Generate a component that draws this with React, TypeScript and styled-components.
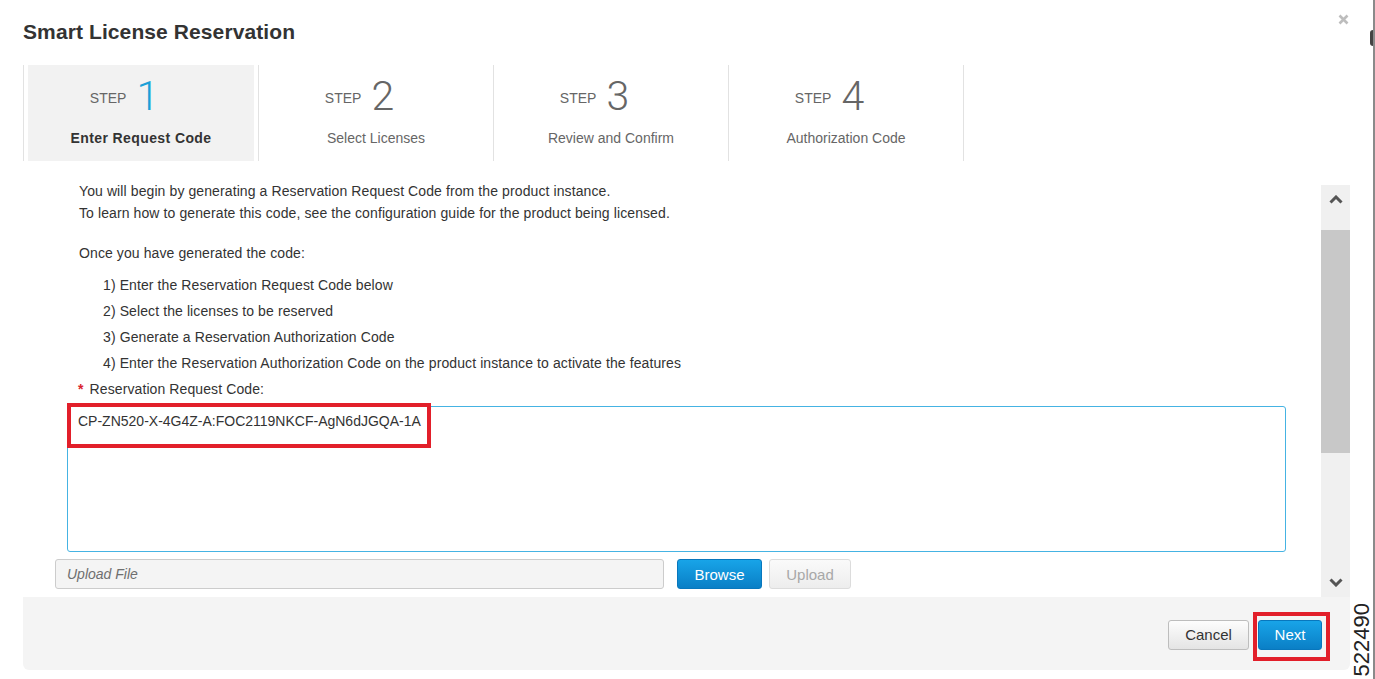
import { FC } from "react";
import styled, { createGlobalStyle, css } from "styled-components";

const GlobalStyle = createGlobalStyle`
  html, body {
    margin: 0;
    padding: 0;
    background: #fff;
  }
  body {
    font-family: "Liberation Sans", Arial, sans-serif;
    color: #333;
  }
`;

const steps = [
  { num: "1", label: "Enter Request Code" },
  { num: "2", label: "Select Licenses" },
  { num: "3", label: "Review and Confirm" },
  { num: "4", label: "Authorization Code" },
];

const Chevron: FC<{ down?: boolean }> = ({ down }) => (
  <svg width="14" height="9" viewBox="0 0 14 9">
    <polyline
      points={down ? "1.5,1.5 7,7 12.5,1.5" : "1.5,7.5 7,2 12.5,7.5"}
      fill="none"
      stroke="#555"
      strokeWidth="3"
    />
  </svg>
);

export default function App() {
  return (
    <>
      <GlobalStyle />
      <StyledPage>
        <StyledDialog>
          <StyledHeader>
            <StyledTitle>Smart License Reservation</StyledTitle>
            <StyledClose aria-label="close">
              <svg width="11" height="11" viewBox="0 0 11 11">
                <path d="M1.5 1.5 L9.5 9.5 M9.5 1.5 L1.5 9.5" stroke="#bdbdbd" strokeWidth="2.6" />
              </svg>
            </StyledClose>
          </StyledHeader>

          <StyledSteps>
            {steps.map((s, i) => (
              <StyledStep key={s.num} $last={i === steps.length - 1}>
                <StyledStepInner $active={i === 0}>
                  <StyledStepRow>
                    <StyledStepWord>STEP</StyledStepWord>
                    <StyledStepNum $active={i === 0}>{s.num}</StyledStepNum>
                  </StyledStepRow>
                  <StyledStepLabel $active={i === 0}>{s.label}</StyledStepLabel>
                </StyledStepInner>
              </StyledStep>
            ))}
          </StyledSteps>

          <StyledBody>
            <StyledContent>
              <StyledIntro>
                <p>You will begin by generating a Reservation Request Code from the product instance.</p>
                <p>To learn how to generate this code, see the configuration guide for the product being licensed.</p>
                <StyledOnce>Once you have generated the code:</StyledOnce>
                <StyledList>
                  <li>1) Enter the Reservation Request Code below</li>
                  <li>2) Select the licenses to be reserved</li>
                  <li>3) Generate a Reservation Authorization Code</li>
                  <li>4) Enter the Reservation Authorization Code on the product instance to activate the features</li>
                </StyledList>
              </StyledIntro>
              <StyledFieldLabel>
                <span>*</span>Reservation Request Code:
              </StyledFieldLabel>
              <StyledCodeWrap>
                <StyledTextarea readOnly value="CP-ZN520-X-4G4Z-A:FOC2119NKCF-AgN6dJGQA-1A" />
                <StyledCodeMark />
              </StyledCodeWrap>
              <StyledUploadRow>
                <StyledFileInput placeholder="Upload File" readOnly />
                <StyledButton $variant="primary">Browse</StyledButton>
                <StyledButton $variant="disabled" $gap={7}>
                  Upload
                </StyledButton>
              </StyledUploadRow>
            </StyledContent>
            <StyledScrollbar>
              <StyledScrollUp>
                <Chevron />
              </StyledScrollUp>
              <StyledThumb />
              <StyledScrollDown>
                <Chevron down />
              </StyledScrollDown>
            </StyledScrollbar>
          </StyledBody>

          <StyledFooter>
            <StyledButton $variant="default" $width={81}>
              Cancel
            </StyledButton>
            <StyledNextWrap>
              <StyledButton $variant="primary" $width={64}>
                Next
              </StyledButton>
            </StyledNextWrap>
          </StyledFooter>
        </StyledDialog>

        <StyledGutter>
          <StyledEdgeMark />
          <StyledFigureId>522490</StyledFigureId>
        </StyledGutter>
      </StyledPage>
    </>
  );
}

const StyledPage = styled.div`
  display: flex;
  width: 1375px;
  height: 679px;
  overflow: hidden;
`;
const StyledDialog = styled.div`
  margin-left: 23px;
  width: 1327px;
  height: 670px;
  display: flex;
  flex-direction: column;
`;
const StyledHeader = styled.div`
  height: 65px;
  display: flex;
  justify-content: space-between;
  align-items: flex-start;
`;
const StyledTitle = styled.h1`
  margin: 20px 0 0;
  font-size: 21px;
  line-height: 24px;
  font-weight: bold;
  letter-spacing: 0.1px;
  color: #333;
`;
const StyledClose = styled.div`
  margin: 14px 1px 0 0;
  width: 11px;
  height: 11px;
  display: flex;
`;
const StyledSteps = styled.div`
  display: flex;
  height: 96px;
`;
const StyledStep = styled.div<{ $last?: boolean }>`
  width: 235px;
  box-sizing: border-box;
  border-left: 1px solid #e2e2e2;
  padding: 0 4px;
  ${(p) =>
    p.$last &&
    css`
      width: 236px;
      border-right: 1px solid #e2e2e2;
    `}
`;
const StyledStepInner = styled.div<{ $active?: boolean }>`
  height: 100%;
  display: flex;
  flex-direction: column;
  align-items: center;
  padding-top: 11px;
  box-sizing: border-box;
  background: ${(p) => (p.$active ? "#f2f2f2" : "transparent")};
`;
const StyledStepRow = styled.div`
  height: 40px;
  display: flex;
  align-items: center;
  padding-right: 33px;
`;
const StyledStepWord = styled.span`
  font-size: 14px;
  color: #666;
  margin-top: 3px;
`;
const StyledStepNum = styled.span<{ $active?: boolean }>`
  font-family: Roboto, "Liberation Sans", sans-serif;
  font-weight: 300;
  font-size: 41px;
  line-height: 40px;
  margin-left: 10px;
  color: ${(p) => (p.$active ? "#1ba0d7" : "#666")};
`;
const StyledStepLabel = styled.div<{ $active?: boolean }>`
  margin-top: 12px;
  font-size: 14px;
  line-height: 20px;
  color: ${(p) => (p.$active ? "#333" : "#666")};
  font-weight: ${(p) => (p.$active ? "bold" : "normal")};
  letter-spacing: ${(p) => (p.$active ? "0.4px" : "0")};
`;
const StyledBody = styled.div`
  height: 436px;
  display: flex;
`;
const StyledContent = styled.div`
  flex: 1;
  padding-top: 19px;
  box-sizing: border-box;
  font-size: 14px;
  letter-spacing: 0.1px;
  color: #333;
`;
const StyledIntro = styled.div`
  padding-left: 56px;
  p {
    margin: 0;
    line-height: 22px;
  }
`;
const StyledOnce = styled.p`
  margin-top: 18px !important;
`;
const StyledList = styled.ul`
  list-style: none;
  margin: 8px 0 0;
  padding: 0 0 0 24px;
  li {
    line-height: 26px;
  }
`;
const StyledFieldLabel = styled.div`
  padding-left: 55px;
  line-height: 26px;
  span {
    color: #d9232e;
    font-weight: bold;
    margin-right: 6px;
  }
`;
const StyledCodeWrap = styled.div`
  position: relative;
  margin: 4px 35px 0 44px;
  height: 146px;
`;
const StyledTextarea = styled.textarea`
  display: block;
  width: 100%;
  height: 100%;
  box-sizing: border-box;
  border: 1px solid #45b3e3;
  border-radius: 3px;
  padding: 6px 10px;
  font-family: "Liberation Sans", Arial, sans-serif;
  font-size: 14px;
  line-height: 17px;
  color: #333;
  resize: none;
  outline: none;
`;
const StyledCodeMark = styled.div`
  position: absolute;
  left: 0;
  top: -3px;
  width: 364px;
  height: 45px;
  box-sizing: border-box;
  border: 4px solid #e21f2a;
  pointer-events: none;
`;
const StyledUploadRow = styled.div`
  display: flex;
  align-items: center;
  margin: 7px 0 0 32px;
  height: 30px;
`;
const StyledFileInput = styled.input`
  width: 609px;
  height: 30px;
  box-sizing: border-box;
  border: 1px solid #ccc;
  border-radius: 3px;
  background: #f4f4f4;
  padding: 0 11px;
  font-family: "Liberation Sans", Arial, sans-serif;
  font-size: 14px;
  margin-right: 13px;
  outline: none;
  &::placeholder {
    color: #6f6f6f;
    font-style: italic;
  }
`;
const StyledButton = styled.button<{
  $variant: "primary" | "default" | "disabled";
  $width?: number;
  $gap?: number;
}>`
  height: 30px;
  width: ${(p) => (p.$width ? `${p.$width}px` : p.$variant === "primary" ? "85px" : "82px")};
  margin-left: ${(p) => (p.$gap ? `${p.$gap}px` : "0")};
  box-sizing: border-box;
  border-radius: 3px;
  font-family: "Liberation Sans", Arial, sans-serif;
  font-size: 15px;
  padding: 0;
  cursor: pointer;
  ${(p) =>
    p.$variant === "primary" &&
    css`
      background: linear-gradient(#18a4e8, #0a7fc6);
      border: 1px solid #0877bd;
      color: #fff;
    `}
  ${(p) =>
    p.$variant === "default" &&
    css`
      background: linear-gradient(#fdfdfd, #e4e4e4);
      border: 1px solid #bdbdbd;
      color: #333;
    `}
  ${(p) =>
    p.$variant === "disabled" &&
    css`
      background: linear-gradient(#fafafa, #ededed);
      border: 1px solid #dcdcdc;
      color: #a8a8a8;
    `}
`;
const StyledScrollbar = styled.div`
  width: 29px;
  margin-top: 24px;
  background: #f0f0f0;
  display: flex;
  flex-direction: column;
`;
const StyledScrollUp = styled.div`
  height: 45px;
  display: flex;
  justify-content: center;
  padding-top: 10px;
  box-sizing: border-box;
`;
const StyledThumb = styled.div`
  height: 223px;
  background: #c8c8c8;
`;
const StyledScrollDown = styled.div`
  flex: 1;
  display: flex;
  justify-content: center;
  align-items: flex-end;
  padding-bottom: 10px;
`;
const StyledFooter = styled.div`
  height: 73px;
  background: #f4f4f4;
  border-radius: 0 0 6px 6px;
  display: flex;
  justify-content: flex-end;
  align-items: center;
  gap: 9px;
  padding-right: 28px;
  padding-top: 2px;
  box-sizing: border-box;
`;
const StyledNextWrap = styled.div`
  position: relative;
  display: flex;
  &::after {
    content: "";
    position: absolute;
    left: -5px;
    right: -8px;
    top: -8px;
    bottom: -11px;
    border: 4px solid #e21f2a;
    pointer-events: none;
  }
`;
const StyledGutter = styled.div`
  flex: 1;
  display: flex;
  flex-direction: column;
  align-items: flex-end;
  border-right: 2px solid #8a8a8a;
`;
const StyledEdgeMark = styled.div`
  margin-top: 30px;
  width: 3px;
  height: 16px;
  border-radius: 8px 0 0 8px;
  background: #444;
`;
const StyledFigureId = styled.div`
  margin-top: auto;
  margin-bottom: 3px;
  margin-right: 1px;
  writing-mode: vertical-rl;
  transform: rotate(180deg);
  font-family: "Liberation Sans", Arial, sans-serif;
  font-size: 22px;
  line-height: 20px;
  color: #222;
`;
